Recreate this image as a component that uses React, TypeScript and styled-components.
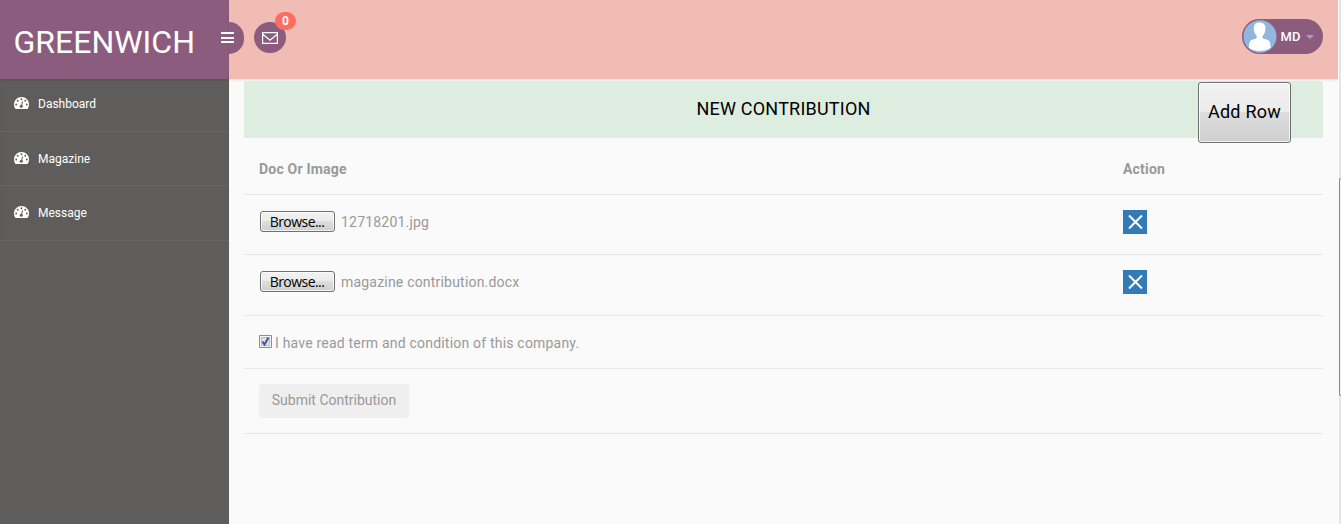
import React from "react";
import styled, { createGlobalStyle } from "styled-components";

const GlobalStyle = createGlobalStyle`
  * { box-sizing: border-box; }
  body {
    margin: 0;
    background: #fafafa;
    color: #999;
    font: 400 14px/20px Roboto, sans-serif;
    overflow: hidden;
  }
  button { font-family: inherit; margin: 0; }
`;

const Page = styled.div`
  display: grid;
  grid-template-columns: 229px 1fr 3px;
  height: 524px;
`;

const Sidebar = styled.aside`
  background: #5e5d5b;
`;

const Brand = styled.div`
  height: 79px;
  padding: 4px 0 0 13.500px;
  background: #8b5c7e;
  color: #fff;
  font-size: 32px;
  line-height: 76px;
  white-space: nowrap;
`;

const Nav = styled.nav`
  box-shadow: inset 0 2px 2px rgba(0, 0, 0, 0.08);
`;

const NavItem = styled.a<{ $height: number; $top: number }>`
  display: flex;
  align-items: flex-start;
  height: ${(p) => p.$height}px;
  padding: ${(p) => p.$top}px 0 0 14px;
  gap: 9px;
  border-bottom: 1px solid #686765;
  color: #fff;
  font-size: 12px;
  line-height: 20px;
  svg { margin-top: 3px; }
`;

const Main = styled.main`
  min-width: 0;
`;

const TopBar = styled.header`
  display: flex;
  align-items: flex-start;
  height: 79px;
  background: #f1bcb4;
  box-shadow: 0 1px 2px rgba(0, 0, 0, 0.13);
`;

const MenuToggle = styled.button`
  width: 15px;
  height: 32px;
  margin-top: 22px;
  padding: 0;
  border: 0;
  border-radius: 0 16px 16px 0;
  background: #8b5c7e;
  svg { display: block; margin-left: -8px; position: relative; }
`;

const MailButton = styled.button`
  position: relative;
  width: 32px;
  height: 31px;
  margin: 22px 0 0 10px;
  padding: 0;
  border: 0;
  border-radius: 50%;
  background: #8b5c7e;
  svg { display: block; margin: 1px 0 0 8px; }
`;

const Badge = styled.span`
  position: absolute;
  left: 21px;
  top: -10px;
  width: 21px;
  height: 18px;
  border-radius: 9px;
  background: #ff6c60;
  color: #fff;
  font: 700 12px/18px Roboto, sans-serif;
  text-align: center;
`;

const UserMenu = styled.button`
  display: flex;
  align-items: center;
  width: 81px;
  height: 35px;
  margin: 19px 15px 0 auto;
  padding: 0 0 0 1px;
  border: 0;
  border-radius: 18px;
  background: #8b5c7e;
  color: #fff;
  font-size: 13px;
  font-weight: 500;
`;

const UserName = styled.span`
  width: 21px;
  margin: 0 5px 0 3px;
`;

const Caret = styled.span`
  border: 4px solid transparent;
  border-top-color: #a7a0b5;
  border-bottom: 0;
`;

const Content = styled.section`
  margin: 2px 15px 0;
`;

const PanelTitle = styled.div`
  display: grid;
  grid-template-columns: 1fr 93px 32px;
  height: 57px;
  padding-top: 1px;
  border-radius: 3px 3px 0 0;
  background: #ddede0;
  color: #000;
  font-size: 18px;
`;

const Heading = styled.h1`
  margin: 0 0 0 125px;
  font-size: 18px;
  font-weight: 400;
  line-height: 54px;
  letter-spacing: 0.22px;
  text-align: center;
`;

const ClassicButton = styled.button<{ $large?: boolean }>`
  flex: none;
  width: ${(p) => (p.$large ? 93 : 75)}px;
  height: ${(p) => (p.$large ? 61 : 21)}px;
  padding: ${(p) => (p.$large ? "0 0 2px" : "0 1px 0 0")};
  border: 1px solid #707070;
  border-radius: 3px;
  background: linear-gradient(#f2f2f2 0, #ebebeb 49%, #dddddd 50%, #cfcfcf 100%);
  box-shadow: inset 0 0 0 1px rgba(255, 255, 255, 0.75);
  color: #000;
  font: ${(p) => (p.$large ? '18px/57px Roboto' : '14px/19px "Open Sans"')}, sans-serif;
  letter-spacing: ${(p) => (p.$large ? 0.25 : -0.55)}px;
  white-space: nowrap;
`;

const Row = styled.div<{ $height: number; $top: number }>`
  display: grid;
  grid-template-columns: 864px 1fr;
  align-items: start;
  height: ${(p) => p.$height}px;
  padding: ${(p) => p.$top}px 0 0 15px;
  border-bottom: 1px solid #e7e7e7;
  letter-spacing: 0.2px;
`;

const ColumnName = styled.b`
  font-weight: 700;
`;

const FileField = styled.div`
  display: flex;
  align-items: center;
  padding: 1px 0 0 1px;
  gap: 6px;
`;

const RemoveButton = styled.button`
  width: 24px;
  height: 24px;
  padding: 0;
  border: 0;
  background: #337ab7;
  svg { display: block; }
`;

const Terms = styled.label`
  display: flex;
  gap: 3px;
  svg { margin-top: 2px; }
`;

const SubmitButton = styled.button`
  width: 150px;
  height: 34px;
  padding: 0 0 2px;
  border: 0;
  border-radius: 4px;
  background: #efefef;
  color: #999;
  font-size: 14px;
`;

const ScrollTrack = styled.div`
  padding-top: 178px;
  border-left: 1px solid #fafafa;
  background: #e6e6e6;
`;

const ScrollThumb = styled.div`
  height: 218px;
  border: 1px solid #8c8c8c;
  border-right: 0;
  border-radius: 2px 0 0 2px;
  background: #efefef;
`;

const Gauge = () => (
  <svg width="15" height="12" viewBox="0 0 15 12">
    <path
      fill="#fff"
      d="M7.500 0C3.300 0 0 3.300 0 7.500c0 1.500.4 2.900 1.100 4 .2.300.4.500.8.500h11.200c.4 0 .6-.2.800-.5.7-1.100 1.100-2.500 1.100-4C15 3.300 11.700 0 7.500 0z"
    />
    <g fill="#5e5d5b">
      <circle cx="2.200" cy="7.500" r=".95" />
      <circle cx="3.700" cy="3.800" r=".95" />
      <circle cx="7.500" cy="2.200" r=".95" />
      <circle cx="11.300" cy="3.800" r=".95" />
      <circle cx="12.800" cy="7.500" r=".95" />
      <circle cx="7.300" cy="9.200" r="1.500" />
    </g>
    <path d="M7.500 8.800 8.500 4.800" stroke="#5e5d5b" strokeWidth="1" strokeLinecap="round" />
  </svg>
);

const Avatar = () => (
  <svg width="34" height="33" viewBox="0 0 34 33">
    <defs>
      <clipPath id="avatar"><ellipse cx="17" cy="16.5" rx="16.5" ry="16.3" /></clipPath>
    </defs>
    <g clipPath="url(#avatar)">
      <path fill="#92b7df" d="M0 0h34v33H0z" />
      <path
        fill="#fff"
        stroke="#78a2cf"
        strokeWidth=".6"
        d="M16.500 2c-4 0-6.300 2.700-6.100 6.500.1 3.200 1.100 5.700 3 7.700v1.500c-1.200 1-4.500 1.200-6 2.600-1.500 1.400-1.900 4.700-2 7.500 3 2.700 6.600 3.600 11.100 3.600s8.600-.9 11.600-3.600c-.1-2.800-.5-6.100-2-7.500-1.500-1.400-5-1.600-6.200-2.600v-1.500c1.900-2 2.900-4.500 3-7.700C23.100 4.700 20.500 2 16.500 2z"
      />
    </g>
  </svg>
);

const FileRow = ({ name, height }: { name: string; height: number }) => (
  <Row $height={height} $top={15}>
    <FileField>
      <ClassicButton>Browse...</ClassicButton>
      <span>{name}</span>
    </FileField>
    <RemoveButton aria-label="Remove">
      <svg width="24" height="24" viewBox="0 0 24 24" stroke="#fff" strokeWidth="2">
        <path d="M6 5.500 19 18.500M19 5.500 6 18.500" />
      </svg>
    </RemoveButton>
  </Row>
);

const navItems = [
  { label: "Dashboard", height: 53, top: 15 },
  { label: "Magazine", height: 54, top: 17 },
  { label: "Message", height: 55, top: 17 },
];

export default function App() {
  return (
    <Page>
      <GlobalStyle />
      <Sidebar>
        <Brand>GREENWICH</Brand>
        <Nav>
          {navItems.map((item) => (
            <NavItem key={item.label} $height={item.height} $top={item.top}>
              <Gauge />
              {item.label}
            </NavItem>
          ))}
        </Nav>
      </Sidebar>
      <Main>
        <TopBar>
          <MenuToggle aria-label="Menu">
            <svg width="13" height="12" fill="#fff">
              <path d="M0 0h13v2H0zM0 5h13v2H0zM0 9h13v2H0z" />
            </svg>
          </MenuToggle>
          <MailButton aria-label="Messages">
            <svg width="16" height="12" fill="none" stroke="#fff" strokeWidth="1.200">
              <path d="M.6.600h14.800v10.800H.6zM.8 2.200 8 8.300l7.200-6.100" />
            </svg>
            <Badge>0</Badge>
          </MailButton>
          <UserMenu>
            <Avatar />
            <UserName>MD</UserName>
            <Caret />
          </UserMenu>
        </TopBar>
        <Content>
          <PanelTitle>
            <Heading>NEW CONTRIBUTION</Heading>
            <ClassicButton $large>Add Row</ClassicButton>
          </PanelTitle>
          <Row $height={57} $top={21}>
            <ColumnName>Doc Or Image</ColumnName>
            <ColumnName>Action</ColumnName>
          </Row>
          <FileRow name="12718201.jpg" height={60} />
          <FileRow name="magazine contribution.docx" height={61} />
          <Row $height={53} $top={17}>
            <Terms>
              <svg width="13" height="13" fill="none">
                <path d="M.5.500h12v12H.5z" fill="#f4f4f4" stroke="#8b8c8d" />
                <path d="M2.500 2.500h8v8h-8z" fill="#dde0e5" stroke="#b8bdc4" />
                <path d="m3.500 6.500 2 3 4-7" stroke="#43569b" strokeWidth="2" />
              </svg>
              I have read term and condition of this company.
            </Terms>
          </Row>
          <Row $height={65} $top={15}>
            <SubmitButton disabled>Submit Contribution</SubmitButton>
          </Row>
        </Content>
      </Main>
      <ScrollTrack>
        <ScrollThumb />
      </ScrollTrack>
    </Page>
  );
}
